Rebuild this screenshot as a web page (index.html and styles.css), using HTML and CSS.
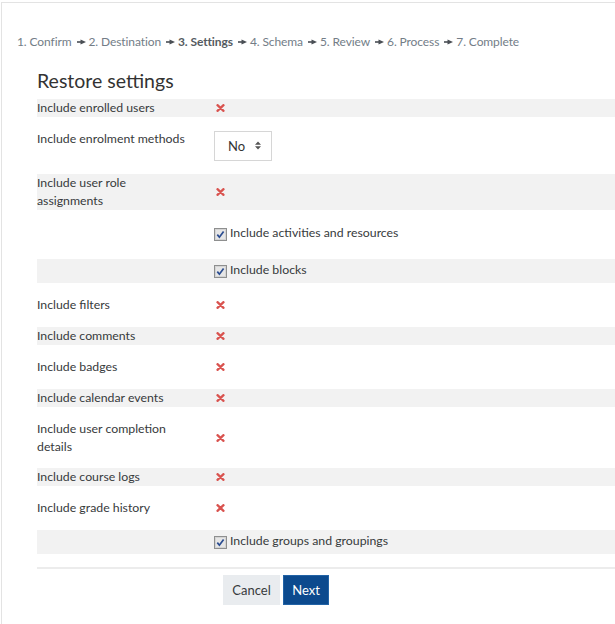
FILE: index.html
```html
<!DOCTYPE html>
<html lang="en">
<head>
<meta charset="utf-8">
<title>Restore settings</title>
<link rel="stylesheet" href="styles.css">
</head>
<body>
<div class="page">
  <nav class="steps">
    <span>1. Confirm</span><svg class="sep" width="9" height="6" viewBox="0 0 9 6"><rect x="0" y="2.2" width="4" height="1.6"/><path d="M3.5 0.5 L9 3 L3.5 5.5 Z"/></svg><span>2. Destination</span><svg class="sep" width="9" height="6" viewBox="0 0 9 6"><rect x="0" y="2.2" width="4" height="1.6"/><path d="M3.5 0.5 L9 3 L3.5 5.5 Z"/></svg><strong class="current">3. Settings</strong><svg class="sep" width="9" height="6" viewBox="0 0 9 6"><rect x="0" y="2.2" width="4" height="1.6"/><path d="M3.5 0.5 L9 3 L3.5 5.5 Z"/></svg><span>4. Schema</span><svg class="sep" width="9" height="6" viewBox="0 0 9 6"><rect x="0" y="2.2" width="4" height="1.6"/><path d="M3.5 0.5 L9 3 L3.5 5.5 Z"/></svg><span>5. Review</span><svg class="sep" width="9" height="6" viewBox="0 0 9 6"><rect x="0" y="2.2" width="4" height="1.6"/><path d="M3.5 0.5 L9 3 L3.5 5.5 Z"/></svg><span>6. Process</span><svg class="sep" width="9" height="6" viewBox="0 0 9 6"><rect x="0" y="2.2" width="4" height="1.6"/><path d="M3.5 0.5 L9 3 L3.5 5.5 Z"/></svg><span>7. Complete</span>
  </nav>

  <form class="restore">
    <h2 class="title">Restore settings</h2>

    <div class="row shade">
      <div class="label">Include enrolled users</div>
      <div class="ctl"><svg class="no" width="9" height="8" viewBox="0 0 9 8"><path d="M1.5 1.2 L7.5 6.8 M7.5 1.2 L1.5 6.8"/></svg></div>
    </div>

    <div class="row">
      <div class="label">Include enrolment methods</div>
      <div class="ctl top">
        <div class="select"><span>No</span><svg class="updown" width="6" height="9" viewBox="0 0 6 9"><path d="M0 3.8 L3 0.5 L6 3.8 Z M0 5.2 L3 8.5 L6 5.2 Z"/></svg></div>
      </div>
    </div>

    <div class="row shade">
      <div class="label">Include user role assignments</div>
      <div class="ctl"><svg class="no" width="9" height="8" viewBox="0 0 9 8"><path d="M1.5 1.2 L7.5 6.8 M7.5 1.2 L1.5 6.8"/></svg></div>
    </div>

    <div class="row check-row">
      <div class="label"></div>
      <div class="ctl">
        <svg class="cb" width="13" height="13" viewBox="0 0 13 13"><rect x="0.5" y="0.5" width="12" height="12" fill="#f4f4f4" stroke="#8e8f8f"/><rect x="1.5" y="1.5" width="10" height="10" fill="#e6e6e6" stroke="#d4d4d4"/><path d="M3.3 6.6 L5.4 9.2 L9.6 3.4" fill="none" stroke="#2b4d91" stroke-width="1.7"/></svg>
        <span class="cb-text">Include activities and resources</span>
      </div>
    </div>

    <div class="row check-row shade">
      <div class="label"></div>
      <div class="ctl">
        <svg class="cb" width="13" height="13" viewBox="0 0 13 13"><rect x="0.5" y="0.5" width="12" height="12" fill="#f4f4f4" stroke="#8e8f8f"/><rect x="1.5" y="1.5" width="10" height="10" fill="#e6e6e6" stroke="#d4d4d4"/><path d="M3.3 6.6 L5.4 9.2 L9.6 3.4" fill="none" stroke="#2b4d91" stroke-width="1.7"/></svg>
        <span class="cb-text">Include blocks</span>
      </div>
    </div>

    <div class="row">
      <div class="label">Include filters</div>
      <div class="ctl"><svg class="no" width="9" height="8" viewBox="0 0 9 8"><path d="M1.5 1.2 L7.5 6.8 M7.5 1.2 L1.5 6.8"/></svg></div>
    </div>

    <div class="row shade">
      <div class="label">Include comments</div>
      <div class="ctl"><svg class="no" width="9" height="8" viewBox="0 0 9 8"><path d="M1.5 1.2 L7.5 6.8 M7.5 1.2 L1.5 6.8"/></svg></div>
    </div>

    <div class="row">
      <div class="label">Include badges</div>
      <div class="ctl"><svg class="no" width="9" height="8" viewBox="0 0 9 8"><path d="M1.5 1.2 L7.5 6.8 M7.5 1.2 L1.5 6.8"/></svg></div>
    </div>

    <div class="row shade">
      <div class="label">Include calendar events</div>
      <div class="ctl"><svg class="no" width="9" height="8" viewBox="0 0 9 8"><path d="M1.5 1.2 L7.5 6.8 M7.5 1.2 L1.5 6.8"/></svg></div>
    </div>

    <div class="row">
      <div class="label">Include user completion details</div>
      <div class="ctl"><svg class="no" width="9" height="8" viewBox="0 0 9 8"><path d="M1.5 1.2 L7.5 6.8 M7.5 1.2 L1.5 6.8"/></svg></div>
    </div>

    <div class="row shade">
      <div class="label">Include course logs</div>
      <div class="ctl"><svg class="no" width="9" height="8" viewBox="0 0 9 8"><path d="M1.5 1.2 L7.5 6.8 M7.5 1.2 L1.5 6.8"/></svg></div>
    </div>

    <div class="row">
      <div class="label">Include grade history</div>
      <div class="ctl"><svg class="no" width="9" height="8" viewBox="0 0 9 8"><path d="M1.5 1.2 L7.5 6.8 M7.5 1.2 L1.5 6.8"/></svg></div>
    </div>

    <div class="row check-row shade">
      <div class="label"></div>
      <div class="ctl">
        <svg class="cb" width="13" height="13" viewBox="0 0 13 13"><rect x="0.5" y="0.5" width="12" height="12" fill="#f4f4f4" stroke="#8e8f8f"/><rect x="1.5" y="1.5" width="10" height="10" fill="#e6e6e6" stroke="#d4d4d4"/><path d="M3.3 6.6 L5.4 9.2 L9.6 3.4" fill="none" stroke="#2b4d91" stroke-width="1.7"/></svg>
        <span class="cb-text">Include groups and groupings</span>
      </div>
    </div>

    <div class="divider"></div>

    <div class="buttons">
      <button type="button" class="btn btn-cancel">Cancel</button>
      <button type="button" class="btn btn-next">Next</button>
    </div>
  </form>
</div>
</body>
</html>
```
FILE: styles.css
```css
html, body {
  margin: 0;
  padding: 0;
  background: #ffffff;
  overflow: hidden;
}

body {
  font-family: Lato, "Open Sans", "Liberation Sans", sans-serif;
  color: #373a3c;
}

.page {
  box-sizing: border-box;
  height: calc(100vh - 2px);
  margin: 2px 0 0 1px;
  border-top: 1px solid #e3e3e3;
  border-left: 1px solid #e3e3e3;
  padding: 30px 0 0 15px;
}

.steps {
  font-size: 12px;
  letter-spacing: -0.1px;
  line-height: 18px;
  color: #737d87;
  white-space: nowrap;
}

.steps .current {
  font-weight: 700;
  color: #555b61;
}

.sep {
  display: inline-block;
  vertical-align: middle;
  margin: -1px 3px 0 5px;
  fill: #4a4f55;
}

.restore {
  padding-left: 20px;
}

.title {
  font-size: 19.5px;
  line-height: 24px;
  font-weight: 400;
  color: #333333;
  margin: 17.5px 0 6.5px;
}

.row {
  display: flex;
  align-items: stretch;
  margin-bottom: 12.85px;
  font-size: 12.3px;
  line-height: 18px;
  color: #373a3c;
}

.shade {
  background: #f2f2f2;
}

.label {
  width: 152px;
  flex: none;
}

.ctl {
  margin-left: 25px;
  display: flex;
  align-items: center;
}

.ctl.top {
  align-items: flex-start;
}

.no {
  display: block;
  margin-left: 2px;
  fill: none;
  stroke: #d9534f;
  stroke-width: 2.3;
  stroke-linecap: round;
}

.select {
  box-sizing: border-box;
  width: 58px;
  height: 30px;
  margin-top: 1px;
  border: 1px solid #d6d6d6;
  background: #ffffff;
  display: flex;
  align-items: center;
  padding-left: 13px;
  font-size: 13px;
  color: #333333;
}

.updown {
  display: block;
  margin-left: 10px;
  fill: #555555;
}

.check-row {
  height: 24px;
}

.cb {
  display: block;
  flex: none;
}

.cb-text {
  margin-left: 3px;
  margin-bottom: 3px;
  color: #373a3c;
}

.divider {
  height: 2px;
  background: #ececec;
  margin: 1px 0 6px;
}

.buttons {
  display: flex;
  gap: 3px;
  margin-left: 186px;
}

.btn {
  box-sizing: border-box;
  height: 30px;
  padding: 0;
  font-family: inherit;
  font-size: 13px;
  border: 1px solid transparent;
  border-radius: 0;
  cursor: pointer;
}

.btn-cancel {
  width: 57px;
  background: #e9ecef;
  color: #373a3c;
}

.btn-next {
  width: 46px;
  background: #0c4a8e;
  border-color: #2263a6;
  color: #ffffff;
}
```
